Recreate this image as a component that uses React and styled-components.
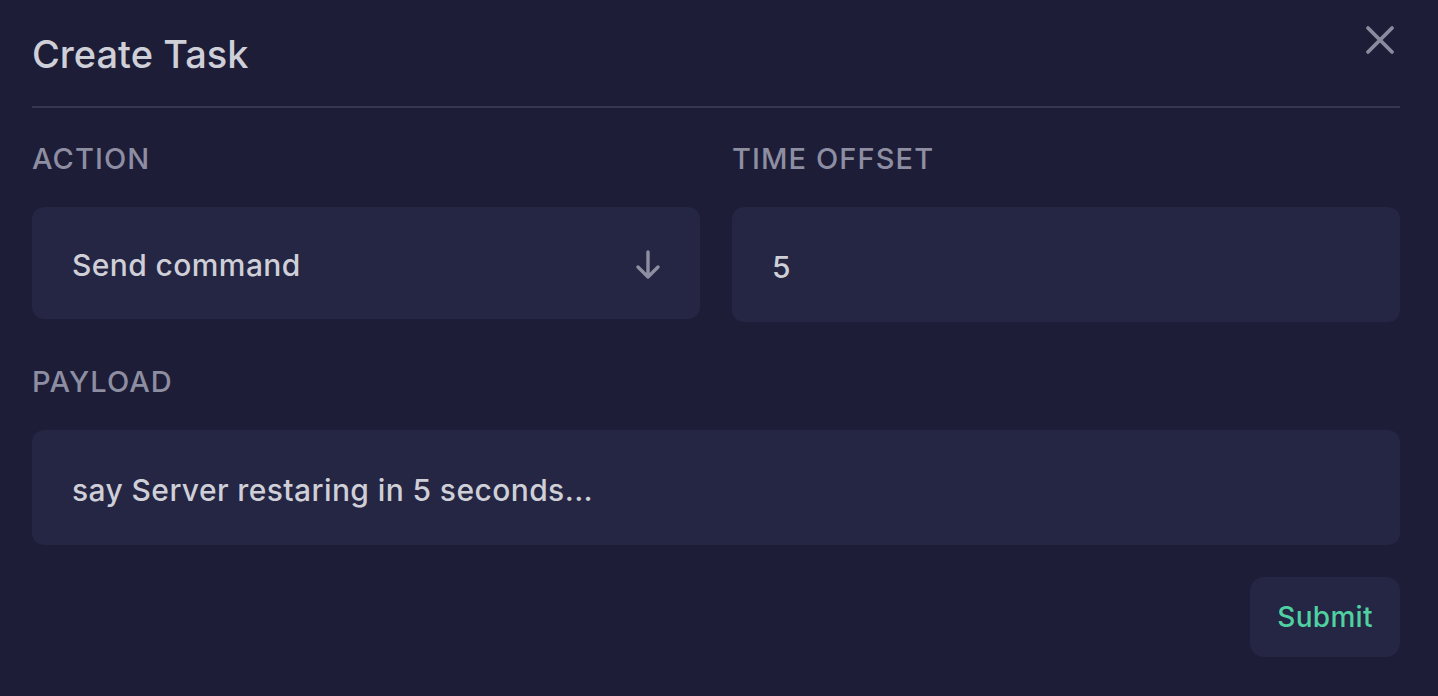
import styled, { createGlobalStyle } from 'styled-components'

const Global = createGlobalStyle`
  html, body {
    margin: 0;
    background: #1d1d38;
    font-family: Inter, "Noto Sans", sans-serif;
  }
`;

const Modal = styled.div`
  position: relative;
  min-height: 696px;
  box-sizing: border-box;
  padding: 28px 38px 0 32px;
  background: #1d1d38;
`;

const Header = styled.div`
  padding-bottom: 26px;
  border-bottom: 2px solid #363650;
`;

const Title = styled.h2`
  margin: 0;
  font-size: 38px;
  font-weight: 500;
  line-height: 52px;
  color: #cfcfd8;
`;

const Close = styled.button`
  position: absolute;
  top: 24px;
  right: 42px;
  width: 32px;
  height: 32px;
  padding: 0;
  border: none;
  background: none;
  color: #8b8b9f;
  cursor: pointer;
`;

const Grid = styled.div`
  display: grid;
  grid-template-columns: 1fr 1fr;
  column-gap: 32px;
  margin-top: 34px;
`;

const Field = styled.div`
  display: flex;
  flex-direction: column;
  margin-top: ${p => p.$top || 0}px;
`;

const Label = styled.label`
  font-size: 29px;
  font-weight: 500;
  letter-spacing: 1.1px;
  line-height: 34px;
  color: #8e8ea2;
  text-transform: uppercase;
  margin-bottom: 31px;
`;

const Box = styled.div`
  display: flex;
  align-items: center;
  justify-content: space-between;
  height: ${p => p.$h}px;
  box-sizing: border-box;
  padding: 4px 38px 0 40px;
  border-radius: 12px;
  background: #252544;
  font-size: 30px;
  font-weight: 500;
  letter-spacing: 0.4px;
  color: #cfcfd8;
`;

const Footer = styled.div`
  display: flex;
  justify-content: flex-end;
  margin-top: 32px;
`;

const Submit = styled.button`
  width: 150px;
  height: 80px;
  border: none;
  border-radius: 14px;
  background: #252544;
  color: #4fd1a1;
  font-family: inherit;
  font-size: 28px;
  font-weight: 500;
  letter-spacing: 0.3px;
  cursor: pointer;
`;

function XIcon() {
  return (
    <svg width="32" height="32" viewBox="0 0 32 32" fill="none" stroke="currentColor" strokeWidth="3.8" strokeLinecap="round">
      <path d="M4 4L28 28M28 4L4 28" />
    </svg>
  );
}

function ArrowDown() {
  return (
    <svg width="28" height="32" viewBox="0 0 28 32" fill="none" stroke="#8e8ea2" strokeWidth="3.4" strokeLinecap="round" strokeLinejoin="round">
      <path d="M14 3V28M4 18L14 28L24 18" />
    </svg>
  );
}

export default function App() {
  return (
    <>
      <Global />
      <Modal>
        <Header>
          <Title>Create Task</Title>
        </Header>
        <Close aria-label="close"><XIcon /></Close>
        <Grid>
          <Field>
            <Label>Action</Label>
            <Box $h={112}>
              Send command
              <ArrowDown />
            </Box>
          </Field>
          <Field>
            <Label>Time offset</Label>
            <Box $h={115}>5</Box>
          </Field>
        </Grid>
        <Field $top={43}>
          <Label>Payload</Label>
          <Box $h={115}>say Server restaring in 5 seconds...</Box>
        </Field>
        <Footer>
          <Submit>Submit</Submit>
        </Footer>
      </Modal>
    </>
  );
}
